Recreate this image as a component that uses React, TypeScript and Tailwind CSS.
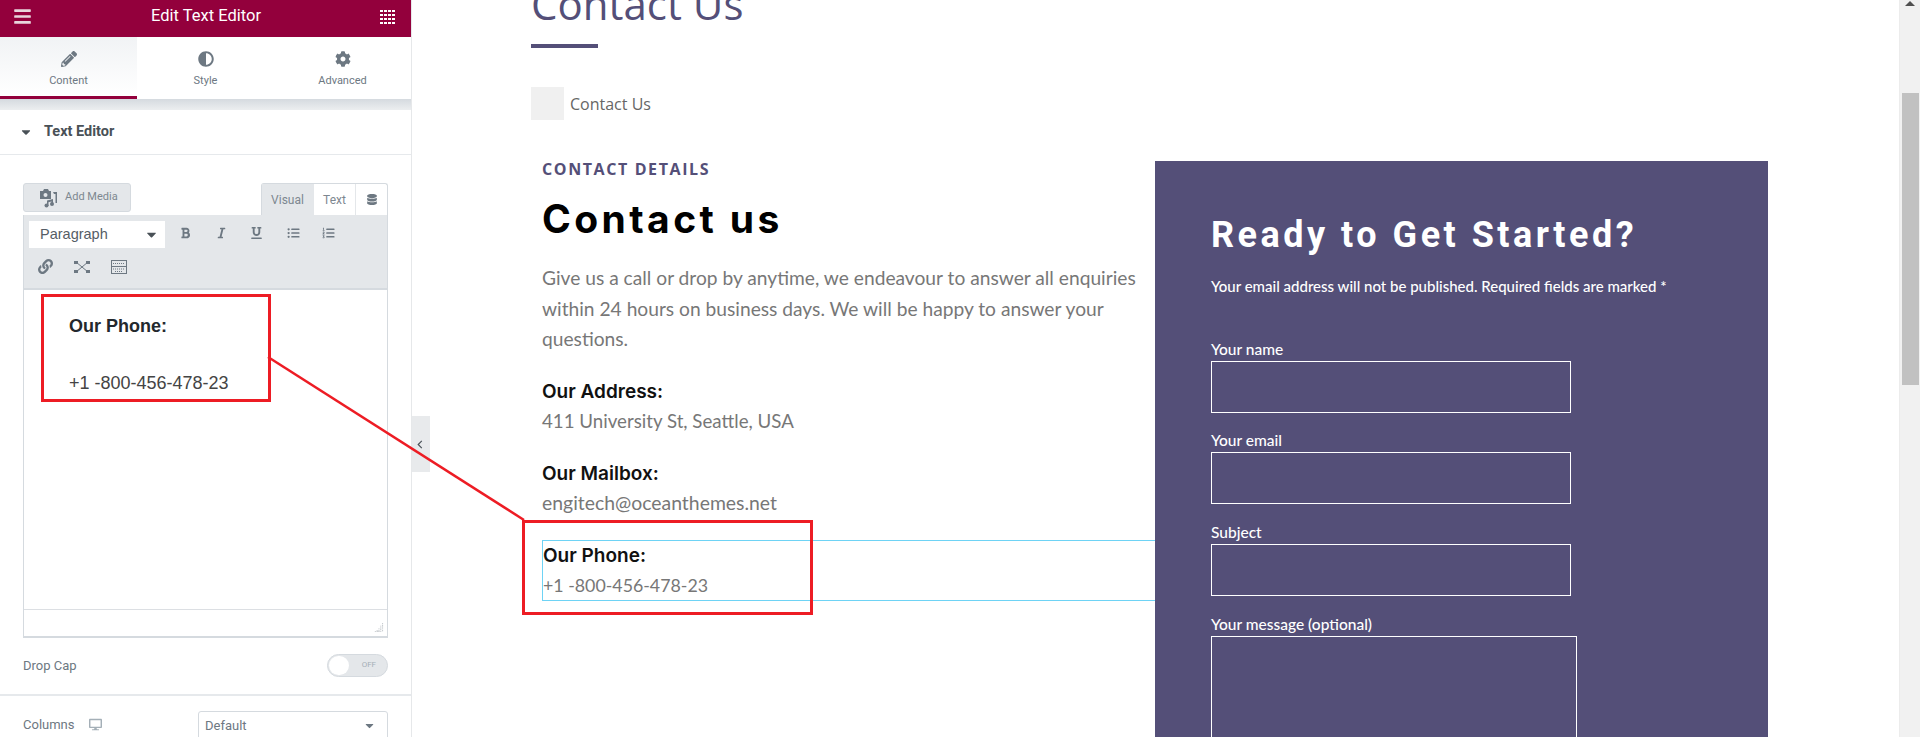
import { FaBars, FaPencilAlt, FaAdjust, FaCog, FaDatabase, FaBold, FaItalic, FaUnderline, FaListUl, FaListOl, FaLink, FaDesktop, FaCaretDown } from 'react-icons/fa';

function MediaIcon() {
  return (
    <svg viewBox="0 0 20 20" className="w-[20px] h-[20px] text-[#6d7882]" fill="currentColor">
      <path d="M1 3h3l1-2h4l1 2h2v8H1z" />
      <circle cx="6.5" cy="7" r="2" fill="#e4e7ea" />
      <path d="M14 4h4v11h-1.500V6H15zM8 12.500l6-1.500v5h-1.500v-2.500l-3 .8V18H8z" />
      <circle cx="7.500" cy="17.500" r="2" />
      <circle cx="13" cy="16" r="2" />
    </svg>
  );
}

function FullscreenIcon() {
  return (
    <svg viewBox="0 0 16 12" className="w-[16px] h-[12px] text-[#6d7882]" fill="currentColor" stroke="currentColor">
      <path d="M2 1l12 10M14 1L2 11" strokeWidth="1" />
      <rect x="0.500" y="0" width="3" height="2.500" />
      <rect x="12.500" y="0" width="3" height="2.500" />
      <rect x="0.500" y="9.500" width="3" height="2.500" />
      <rect x="12.500" y="9.500" width="3" height="2.500" />
    </svg>
  );
}

function KeyboardIcon() {
  return (
    <svg viewBox="0 0 16 14" className="w-[16px] h-[14px] text-[#6d7882]" fill="none" stroke="currentColor">
      <rect x="0.500" y="0.500" width="15" height="13" strokeWidth="1" />
      <path d="M0 6.500h16" strokeWidth="1" />
      <path d="M2 3.500h12M2 9h12M4 11.500h8" strokeWidth="1.200" strokeDasharray="1 1" />
    </svg>
  );
}

function GridIcon() {
  return (
    <svg viewBox="0 0 15 14" className="w-[15px] h-[14px] -mt-[3px]" fill="white">
      <path d="M0 0h3v2H0zM4 0h3v2H4zM8 0h3v2H8zM12 0h3v2h-3zM0 4h3v2H0zM4 4h3v2H4zM8 4h3v2H8zM12 4h3v2h-3zM0 8h3v2H0zM4 8h3v2H4zM8 8h3v2H8zM12 8h3v2h-3zM0 12h3v2H0zM4 12h3v2H4zM8 12h3v2H8zM12 12h3v2h-3z" />
    </svg>
  );
}

function FormField({ label, top }: { label: string; top: string }) {
  return (
    <div className={top}>
      <p className="text-[15.500px] leading-[16px] font-medium">{label}</p>
      <div className="mt-[4px] w-[360px] h-[52px] border border-white" />
    </div>
  );
}

export default function App() {
  return (
    <div className="relative flex w-[1920px] h-[737px] overflow-hidden bg-white font-['Roboto',sans-serif]">
      {/* Editor panel */}
      <aside className="w-[412px] h-full shrink-0 overflow-hidden bg-white border-r border-[#e6e8ea]">
        <div className="h-[37px] bg-[#93003c] flex items-center justify-between pl-[13px] pr-[16px] text-white">
          <FaBars className="w-[19px] h-[19px] -mt-[4px] text-[#e8d5dc]" />
          <span className="text-[16.500px] -mt-[5px]">Edit Text Editor</span>
          <GridIcon />
        </div>
        <div className="h-[62px] grid grid-cols-3 text-[#6d7882] text-[11px] bg-white">
          <div className="flex flex-col items-center pt-[14px] border-b-[3px] border-[#93003c] bg-gradient-to-t from-white to-[#f1f3f5]">
            <FaPencilAlt className="w-[16px] h-[16px]" />
            <span className="mt-[7px] leading-[14px]">Content</span>
          </div>
          <div className="flex flex-col items-center pt-[14px]">
            <FaAdjust className="w-[16px] h-[16px]" />
            <span className="mt-[7px] leading-[14px]">Style</span>
          </div>
          <div className="flex flex-col items-center pt-[14px]">
            <FaCog className="w-[16px] h-[16px]" />
            <span className="mt-[7px] leading-[14px]">Advanced</span>
          </div>
        </div>
        <div className="h-[11px] bg-gradient-to-b from-[#d5dadf] to-[#eceef0]" />
        <div className="h-[45px] border-b border-[#e6e9ec] flex items-center pl-[19px] text-[#495157]">
          <FaCaretDown className="w-[14px] h-[14px]" />
          <span className="ml-[11px] text-[14.500px] font-bold">Text Editor</span>
        </div>

        <div className="pl-[23px] w-[365px] box-content">
          <div className="mt-[28px] flex justify-between items-start">
            <div className="w-[108px] h-[29px] rounded-[3px] border border-[#d5dadf] bg-[#e4e7ea] flex items-center pl-[15px] gap-[6px] text-[#7d8790] text-[11px]">
              <MediaIcon />
              <span>Add Media</span>
            </div>
            <div className="flex h-[32px] border border-b-0 border-[#d5dadf] rounded-t-[3px] text-[12px] text-[#7d8790]">
              <div className="w-[51px] bg-[#e4e7ea] flex items-center justify-center">Visual</div>
              <div className="w-[43px] border-x border-[#e4e7ea] bg-white flex items-center justify-center">Text</div>
              <div className="w-[31px] flex items-center justify-center text-[#6d7882]"><FaDatabase className="w-[10px] h-[11px]" /></div>
            </div>
          </div>

          <div className="h-[75px] bg-[#e4e7ea] border-x border-b-2 border-[#d5dadf] pl-[5px] pt-[6px]">
            <div className="flex items-center">
              <div className="w-[136px] h-[27px] bg-white flex items-center justify-between pl-[11px] pr-[6px] text-[14.500px] text-[#555d66] font-['Liberation_Sans',sans-serif]">
                <span>Paragraph</span>
                <FaCaretDown className="w-[15px] h-[15px] text-[#495157]" />
              </div>
              <div className="grid grid-cols-[repeat(5,35.500px)] text-[#6d7882] ml-[15px] -mt-[4px]">
                <FaBold className="w-[11px] h-[12px]" />
                <FaItalic className="w-[11px] h-[12px]" />
                <FaUnderline className="w-[11px] h-[12px]" />
                <FaListUl className="w-[13px] h-[12px]" />
                <FaListOl className="w-[13px] h-[12px]" />
              </div>
            </div>
            <div className="flex items-center text-[#6d7882] gap-[21px] mt-[11px] ml-[9px]">
              <FaLink className="w-[15px] h-[15px]" />
              <FullscreenIcon />
              <KeyboardIcon />
            </div>
          </div>

          <div className="h-[348px] border-x border-b-2 border-[#d5dadf] flex flex-col">
            <div className="flex-1 pl-[45px] pt-[26px] font-['Liberation_Sans',sans-serif] text-[18px] leading-[20px]">
              <p className="font-bold text-[#23282d]">Our Phone:</p>
              <p className="mt-[37px] text-[#444]">+1 -800-456-478-23</p>
            </div>
            <div className="h-[27px] border-t border-[#dcdfe3] flex justify-end items-end pr-[3px] pb-[3px]">
              <svg viewBox="0 0 12 12" className="w-[11px] h-[11px]" fill="#aab0b6">
                <path d="M10 1h1v1h-1zM10 3h1v1h-1zM8 4h1v1H8zM10 5h1v1h-1zM8 6h1v1H8zM6 7h1v1H6zM10 7h1v1h-1zM8 8h1v1H8zM6 9h1v1H6zM4 9h1v1H4zM10 9h1v1h-1zM2 10h1v1H2zM4 10h1v1H4zM6 10h1v1H6zM8 10h1v1H8z" />
              </svg>
            </div>
          </div>

          <div className="mt-[16px] h-[23px] flex items-center justify-between text-[13px] text-[#6d7882]">
            <span>Drop Cap</span>
            <div className="relative w-[61px] h-[23px] rounded-full bg-[#e4e7ea] border border-[#d5dadf] flex items-center justify-end pr-[11px]">
              <span className="text-[8px] text-[#a4afb7] -mt-[2px]">OFF</span>
              <span className="absolute left-[1px] top-[1px] w-[20px] h-[19px] rounded-full bg-white" />
            </div>
          </div>
        </div>
        <div className="mt-[17px] border-t-2 border-[#e6e9ec]" />
        <div className="pl-[23px] w-[365px] box-content mt-[15px] flex items-start justify-between text-[13px] text-[#6d7882]">
          <div className="flex items-center h-[27px] gap-[14px]">
            <span>Columns</span>
            <FaDesktop className="w-[13px] h-[13px] text-[#a4afb7]" />
          </div>
          <div className="w-[190px] h-[40px] border border-[#d5dadf] rounded-[3px] flex items-start justify-between pl-[6px] pr-[11px] pt-[4px]">
            <span>Default</span>
            <FaCaretDown className="w-[13px] h-[13px] mt-[3px] text-[#6d7882]" />
          </div>
        </div>
      </aside>

      {/* Page preview */}
      <main className="relative flex-1 min-w-0 pl-[119px]">
        <div className="absolute left-0 top-[416px] w-[18px] h-[56px] pr-[3px] bg-[#e8eaec] flex items-center justify-center">
          <svg viewBox="0 0 6 10" className="w-[6px] h-[9px]" fill="none" stroke="#495157" strokeWidth="1.300"><path d="M5 1L1 5l4 4" /></svg>
        </div>

        <h1 className="-mt-[22px] h-[52px] text-[42px] leading-[52px] text-[#544f78] font-['Open_Sans',sans-serif]">Contact Us</h1>
        <div className="mt-[14px] w-[67px] h-[4px] bg-[#544f78]" />
        <div className="mt-[39px] flex items-center">
          <div className="w-[33px] h-[33px] bg-[#f0f0f0]" />
          <span className="ml-[6px] text-[16px] text-[#666] font-['Open_Sans',sans-serif]">Contact Us</span>
        </div>

        <div className="mt-[41px] flex items-start">
          <div className="w-[624px] pl-[11px] font-['Lato',sans-serif] text-[#777] text-[19px] leading-[30px]">
            <p className="mt-[-1px] text-[16px] leading-[18px] tracking-[1.600px] font-bold text-[#544f78] font-['Open_Sans',sans-serif]">CONTACT DETAILS</p>
            <h2 className="mt-[17px] text-[39px] leading-[48px] font-bold text-black tracking-[3.400px] font-['Inter',sans-serif]">Contact us</h2>
            <div className="mt-[20px] w-[610px] text-[19.200px] leading-[30.500px]">Give us a call or drop by anytime, we endeavour to answer all enquiries within 24 hours on business days. We will be happy to answer your questions.</div>
            <p className="mt-[22px] leading-[29px] font-['Inter',sans-serif] text-[19px] font-semibold text-[#111]">Our Address:</p>
            <p className="text-[18.700px]">411 University St, Seattle, USA</p>
            <p className="mt-[23px] leading-[29px] font-['Inter',sans-serif] text-[19px] font-semibold text-[#111]">Our Mailbox:</p>
            <p className="text-[19.400px]">engitech@oceanthemes.net</p>
            <div className="mt-[22px] h-[61px] border border-r-0 border-[#6ed3f5]">
              <p className="leading-[29px] font-['Inter',sans-serif] text-[19px] font-semibold text-[#111]">Our Phone:</p>
              <p className="text-[17.800px]">+1 -800-456-478-23</p>
            </div>
          </div>

          <div className="w-[613px] h-[600px] bg-[#544f78] pl-[56px] text-white font-['Lato',sans-serif]">
            <h3 className="mt-[54px] text-[36px] leading-[40px] font-bold tracking-[3.500px] font-['Roboto',sans-serif]">Ready to Get Started?</h3>
            <p className="mt-[21px] text-[15px] leading-[20px] font-medium">Your email address will not be published. Required fields are marked *</p>
            <FormField label="Your name" top="mt-[45px]" />
            <FormField label="Your email" top="mt-[19px]" />
            <FormField label="Subject" top="mt-[20px]" />
            <div className="mt-[20px]">
              <p className="text-[15.500px] leading-[16px] font-medium">Your message (optional)</p>
              <div className="mt-[4px] w-[366px] h-[200px] border border-white" />
            </div>
          </div>
        </div>
      </main>

      {/* Scrollbar */}
      <div className="w-[21px] h-full shrink-0 bg-[#f1f1f1] border-l border-[#ececec] flex flex-col items-center">
        <svg viewBox="0 0 10 5" className="mt-[1px] w-[10px] h-[5px]" fill="#505050"><path d="M5 0l5 5H0z" /></svg>
        <div className="mt-[87px] w-[17px] h-[292px] bg-[#c1c1c1]" />
      </div>

      {/* Red annotation */}
      <svg className="absolute inset-0 w-[1920px] h-[737px] pointer-events-none" viewBox="0 0 1920 737" fill="none" stroke="#ed1c24">
        <rect x="42.500" y="295.500" width="227" height="105" strokeWidth="3" />
        <rect x="523.500" y="521.500" width="288" height="92" strokeWidth="3" />
        <path d="M268 357L524 520" strokeWidth="2.500" />
      </svg>
    </div>
  );
}
